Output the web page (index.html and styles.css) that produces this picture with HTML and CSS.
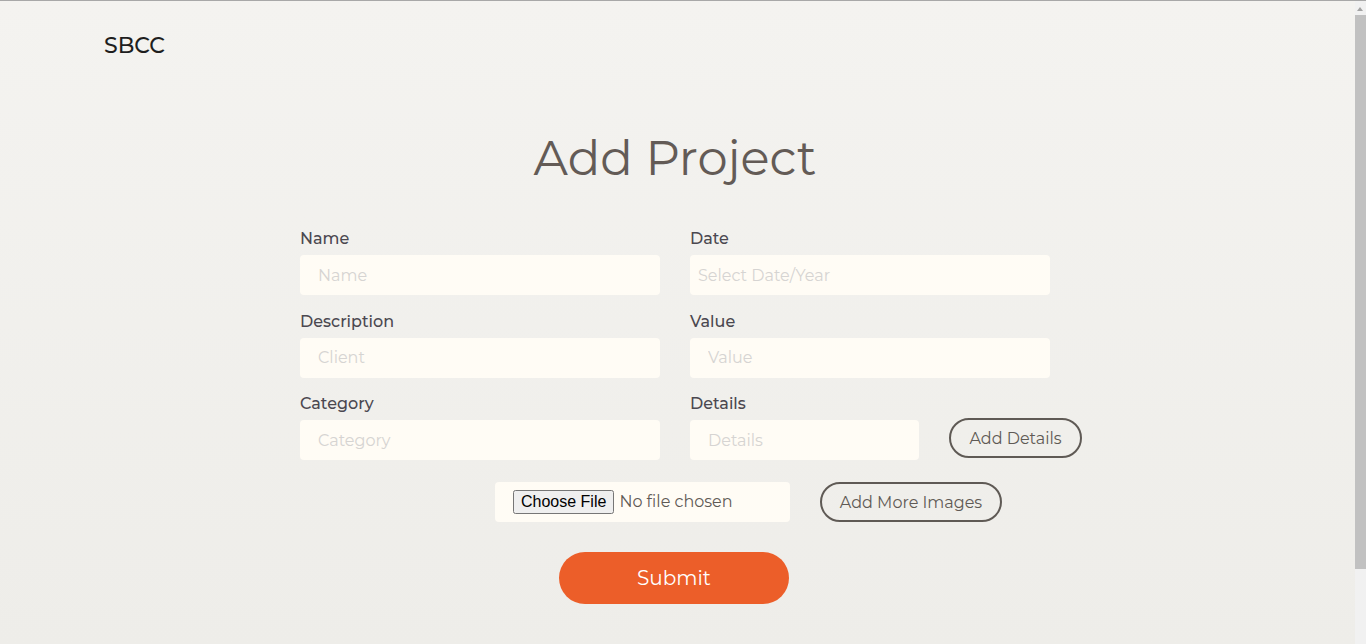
FILE: index.html
```html
<!DOCTYPE html>
<html lang="en">
<head>
<meta charset="utf-8">
<title>Add Project</title>
<link rel="stylesheet" href="styles.css">
</head>
<body>
<header class="topbar">
  <div class="brand">SBCC</div>
</header>
<main class="main">
  <h1 class="title">Add Project</h1>
  <form class="form">
    <div class="grid">
      <div class="field">
        <label class="label">Name</label>
        <input class="input" type="text" placeholder="Name">
      </div>
      <div class="field">
        <label class="label">Date</label>
        <input class="input input-date" type="text" placeholder="Select Date/Year">
      </div>
      <div class="field">
        <label class="label">Description</label>
        <input class="input" type="text" placeholder="Client">
      </div>
      <div class="field">
        <label class="label">Value</label>
        <input class="input" type="text" placeholder="Value">
      </div>
      <div class="field">
        <label class="label">Category</label>
        <input class="input" type="text" placeholder="Category">
      </div>
      <div class="field">
        <label class="label">Details</label>
        <div class="detail-row">
          <input class="input input-details" type="text" placeholder="Details">
          <button type="button" class="outline-btn btn-details">Add Details</button>
        </div>
      </div>
    </div>
    <div class="file-row">
      <div class="file-box">
        <input class="file" type="file">
      </div>
      <button type="button" class="outline-btn btn-images">Add More Images</button>
    </div>
    <div class="submit-row">
      <button type="button" class="submit">Submit</button>
    </div>
  </form>
</main>
<div class="scrollbar" aria-hidden="true">
  <div class="scroll-arrow"></div>
  <div class="scroll-thumb"></div>
</div>
</body>
</html>
```
FILE: styles.css
```css
html {
  border-top: 1px solid #a8a8a8;
  background: linear-gradient(#f4f3f0, #eeede9);
  min-height: 100%;
  overflow: hidden;
}
body {
  margin: 0;
  font-family: "Montserrat", "Inter", "Open Sans", sans-serif;
  color: #5f5a55;
  padding-right: 11px;
}
.topbar {
  padding: 33px 104px 0;
  height: 60px;
  box-sizing: border-box;
}
.brand {
  font-size: 22px;
  font-weight: 500;
  color: #1e1e1e;
  line-height: 24px;
}
.main {
  padding-right: 5px;
}
.title {
  margin: 0;
  padding-top: 67px;
  text-align: center;
  font-weight: 400;
  font-size: 48px;
  line-height: 60px;
  color: #635b56;
}
.form {
  width: 750px;
  margin: 41px auto 0;
}
.grid {
  display: grid;
  grid-template-columns: 360px 360px;
  column-gap: 30px;
  row-gap: 16.5px;
}
.field {
  display: flex;
  flex-direction: column;
}
.label {
  font-size: 16px;
  font-weight: 500;
  color: #4b4850;
  line-height: 20px;
  margin-bottom: 6px;
}
.input {
  height: 40px;
  box-sizing: border-box;
  border: none;
  border-radius: 4px;
  background: #fffcf5;
  padding: 0 18px;
  font-family: inherit;
  font-size: 16px;
  color: #444;
  outline: none;
}
.input::placeholder { color: #d6d4d2; }
.input-date { padding-left: 8px; }
.detail-row {
  display: flex;
  align-items: center;
  gap: 30px;
  width: 392px;
}
.input-details { width: 229px; }
.outline-btn {
  background: transparent;
  border: 2px solid #5f5a55;
  border-radius: 20px;
  height: 40px;
  box-sizing: border-box;
  font-family: inherit;
  font-size: 16px;
  color: #5f5a55;
  padding: 0;
}
.btn-details { width: 133px; margin-top: -4px; }
.file-row {
  display: flex;
  align-items: center;
  gap: 30px;
  margin: 22px 0 0 195px;
}
.file-box {
  width: 295px;
  height: 40px;
  box-sizing: border-box;
  background: #fffcf5;
  border-radius: 4px;
  padding-left: 18px;
  display: flex;
  align-items: center;
}
.file {
  font-family: inherit;
  font-size: 16px;
  color: #5f5a55;
}
.file::file-selector-button {
  font-family: "Liberation Sans", Arial, sans-serif;
  font-size: 16px;
  margin-right: 5px;
}
.btn-images { width: 182px; }
.submit-row {
  display: flex;
  justify-content: center;
  margin-top: 30px;
  padding-right: 2px;
}
.submit {
  width: 230px;
  height: 52px;
  border: none;
  border-radius: 26px;
  background: #ec5e29;
  color: #fff;
  font-family: inherit;
  font-size: 20px;
}
.scrollbar {
  position: fixed;
  top: 1px;
  right: 0;
  bottom: 0;
  width: 11px;
  background: #f1f1f1;
}
.scroll-arrow {
  position: absolute;
  top: 6px;
  left: 2px;
  width: 0;
  height: 0;
  border-left: 3.5px solid transparent;
  border-right: 3.5px solid transparent;
  border-bottom: 4px solid #a3a3a3;
}
.scroll-thumb {
  position: absolute;
  top: 14px;
  left: 0;
  width: 11px;
  height: 554px;
  background: #c1c1c1;
}
```
